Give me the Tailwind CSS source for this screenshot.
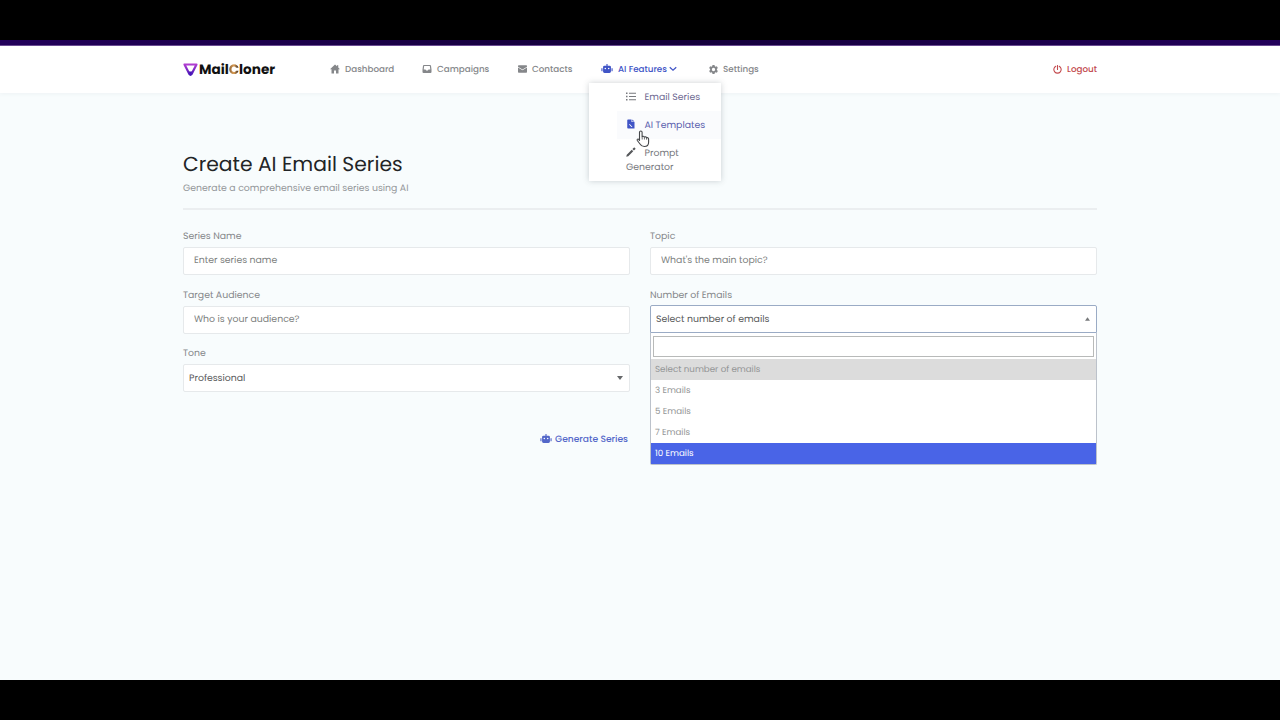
<!DOCTYPE html>
<html lang="en">

<head>
    <meta charset="UTF-8" />
    <meta name="viewport" content="width=device-width, initial-scale=1.0" />
    <title>MailCloner</title>
    <script src="https://cdn.jsdelivr.net/npm/@tailwindcss/browser@4"></script>
</head>

<body class="bg-black font-['Poppins','Inter',sans-serif] text-[9.350px] leading-[14px] text-[#85878a] [text-rendering:geometricPrecision]">
    <svg class="hidden">
        <symbol id="robot" viewBox="0 0 20 16">
            <path fill="currentColor" fill-rule="evenodd" d="M9 0h2v3h3.5A2.5 2.5 0 0 1 17 5.500V13.500A2.500 2.500 0 0 1 14.500 16h-9A2.500 2.500 0 0 1 3 13.500v-8A2.500 2.500 0 0 1 5.500 3H9zM7 6.500a1.400 1.400 0 1 0 0 2.800 1.400 1.400 0 0 0 0-2.800zm6 0a1.400 1.400 0 1 0 0 2.800 1.400 1.400 0 0 0 0-2.800zM0 7.500h2V13H1a1 1 0 0 1-1-1zm18 0h2V12a1 1 0 0 1-1 1h-1z" />
        </symbol>
    </svg>
    <div class="flex flex-col h-[720px] py-10 overflow-hidden">
        <div class="h-1.5 shrink-0 bg-gradient-to-r from-[#22005a] via-[#14003a] to-[#22005a] border-b border-[#6c4a93]"></div>
        <header class="h-[47px] shrink-0 bg-white shadow-[0_1px_4px_rgba(60,80,100,0.06)] relative z-10">
            <div class="w-[914px] h-full mx-auto pb-px flex items-center relative">
                <a href="#" class="w-[147px] pt-px flex items-center gap-px text-[#111]">
                    <svg class="w-[15px] h-[13px]" viewBox="0 0 15 13">
                        <defs>
                            <linearGradient id="logo" x1="0" y1="0" x2="0" y2="1">
                                <stop offset="0" stop-color="#b03dd0" />
                                <stop offset="1" stop-color="#4816b8" />
                            </linearGradient>
                        </defs>
                        <path d="M1.500 1.500h12L8.500 11.200q-1 1.300-2 0z" fill="none" stroke="url(#logo)" stroke-width="2.200" stroke-linejoin="round" />
                        <path d="M5.500 8.500h4L7.500 12z" fill="#4816b8" />
                    </svg>
                    <span class="font-bold text-[13.600px]">Mail<span class="bg-gradient-to-r from-[#8a6238] via-[#e0a055] to-[#2b2019] bg-clip-text text-transparent">C</span>loner</span>
                </a>
                <nav class="flex items-center font-medium text-[8.750px]">
                    <a href="#" class="w-[92px] flex items-center gap-[5px]">
                        <svg class="w-[10px] h-[10px]" viewBox="0 0 20 20" fill="currentColor"><path d="M10 1 0 10.500h3V19h5v-6h4v6h5v-8.500h3L16.500 7V2.500H14v2.200z" /></svg>
                        <span class="mt-px">Dashboard</span>
                    </a>
                    <a href="#" class="w-[96px] flex items-center gap-[5px]">
                        <svg class="w-[10px] h-[10px]" viewBox="0 0 20 20" fill="currentColor"><path fill-rule="evenodd" d="M4 2h12a2 2 0 0 1 2 1.500L19 11v5a2 2 0 0 1-2 2H3a2 2 0 0 1-2-2v-5l1-7.500A2 2 0 0 1 4 2zm.3 2.200L3.400 11H7l1.300 2h3.400L13 11h3.600l-.9-6.800z" /></svg>
                        <span class="mt-px">Campaigns</span>
                    </a>
                    <a href="#" class="w-[83px] flex items-center gap-[5px]">
                        <svg class="w-[9px] h-[8px]" viewBox="0 0 18 15" fill="currentColor"><path d="M1.500 0h15A1.500 1.500 0 0 1 18 1.500V2.800L9 8.500 0 2.800V1.500A1.500 1.500 0 0 1 1.500 0zM0 4.500l9 5.500 9-5.500v9a1.500 1.500 0 0 1-1.500 1.500h-15A1.500 1.500 0 0 1 0 13.500z" /></svg>
                        <span class="mt-px">Contacts</span>
                    </a>
                    <div class="w-[108px] relative text-[#4054c6]">
                        <a href="#" class="flex items-center">
                            <svg class="w-[12px] h-[9px] mr-[5px] -mt-px"><use href="#robot" /></svg>
                            <span class="mt-px">AI Features</span>
                            <svg class="w-[8px] h-[6px] ml-[2px]" viewBox="0 0 16 10" fill="none" stroke="currentColor" stroke-width="2.400"><path d="m1.500 1.500 6.500 6 6.500-6" /></svg>
                        </a>
                        <!-- submenu -->
                        <ul class="absolute top-[21px] -left-[12px] w-[132px] h-[98px] pl-7 bg-white shadow-[0_0_6px_rgba(60,70,80,0.25)] text-[#77797e] text-[9.350px] font-normal">
                            <li class="pt-2 pb-1.5 pl-[9px] whitespace-nowrap">
                                <svg class="inline w-[10px] h-[9px] mr-[6px] -mt-px" viewBox="0 0 20 18" fill="currentColor"><path d="M0 1h3v3H0zm6 .5h14v2H6zM0 7.500h3v3H0zM6 8h14v2H6zM0 14h3v3H0zm6 .5h14v2H6z" /></svg>
                                <span class="text-[#6d6992]">Email Series</span>
                            </li>
                            <li class="pt-2 pb-1.5 pl-[9px] whitespace-nowrap bg-[#fafbfd] text-[#5a5fae]">
                                <svg class="inline w-[10px] h-[10px] mr-[6px] -mt-px" viewBox="0 0 20 20" fill="#4054c6"><path fill-rule="evenodd" d="M4 1h7v5h6v13H4a1.500 1.500 0 0 1-1.500-1.500v-15A1.500 1.500 0 0 1 4 1zm8.500 0L17 4.800h-4.500zM7.500 10l5.500 6h-2.200L6 10.800z" /></svg>
                                <span>AI Templates</span>
                            </li>
                            <li class="pt-2 pb-1.5 pl-[9px]">
                                <svg class="inline w-[10px] h-[10px] mr-[6px] -mt-px" viewBox="0 0 20 20" fill="#55575a"><path d="m1.500 15.500 10-10 3 3-10 10-4 1zM12.800 4.200l2.700-2.700a1.500 1.500 0 0 1 2.200 0l.8.8a1.500 1.500 0 0 1 0 2.200l-2.700 2.700z" /></svg>
                                <span>Prompt Generator</span>
                            </li>
                        </ul>
                        <svg class="absolute top-[68px] left-[35px] w-[14px] h-[18px]" viewBox="0 0 14 18"><path d="M3.500 10.500V2.300a1.300 1.300 0 0 1 2.600 0V7c.3-1 2.100-1 2.300.3.5-.8 2-.6 2.200.6.700-.6 2-.2 2 1v3.300c0 2.800-1.400 4.300-4.300 4.300-2.300 0-3.300-.8-4.300-2.500L1.300 10.500C.7 9.300 2 8.500 2.800 9.400z" fill="#fff" stroke="#45474a" stroke-width="1.100" stroke-linejoin="round" /><path d="M6.200 7.500v2m2.200-2v2m2.200-1.500v1.700" stroke="#45474a" stroke-width=".8" /></svg>
                    </div>
                    <a href="#" class="flex items-center gap-[5px]">
                        <svg class="w-[9px] h-[9px]" viewBox="0 0 18 18" fill="currentColor"><path fill-rule="evenodd" d="M7 0h4l.6 2.600 1.600.9 2.500-.8 2 3.400L15.800 8v2l1.900 1.900-2 3.400-2.500-.8-1.600.9L11 18H7l-.6-2.600-1.600-.9-2.500.8-2-3.400L2.200 10V8L.3 6.100l2-3.400 2.500.8 1.600-.9zM9 5.700a3.300 3.300 0 1 0 0 6.600 3.300 3.300 0 0 0 0-6.600z" /></svg>
                        <span class="mt-px">Settings</span>
                    </a>
                </nav>
                <a href="#" class="ml-auto flex items-center gap-[5px] font-medium text-[8.750px] text-[#c34a4e]">
                    <svg class="w-[9px] h-[9px]" viewBox="0 0 18 18" fill="none" stroke="currentColor" stroke-width="2.200" stroke-linecap="round"><path d="M9 1v8M5.500 2.500a7.300 7.300 0 1 0 7 0" /></svg>
                    <span class="mt-px">Logout</span>
                </a>
            </div>
        </header>
        <main class="flex-1 bg-[#f8fcfd]">
            <div class="w-[914px] mx-auto pt-[58px]">
                <h1 class="text-[20.300px] leading-[28px] text-[#222426]">Create AI Email Series</h1>
                <p class="mt-[3px] text-[#939699]">Generate a comprehensive email series using AI</p>
                <hr class="mt-[12px] border-t-2 border-[#ebeef0]" />
                <form class="mt-[19px] grid grid-cols-2 gap-x-5">
                    <div class="h-[58.700px]">
                        <label class="block pt-px mb-[3px]">Series Name</label>
                        <input type="text" placeholder="Enter series name" class="block w-full h-7 px-[10px] bg-white border border-[#e6e9eb] rounded-xs [text-rendering:inherit] placeholder:text-[#7d7f80]" />
                    </div>
                    <div class="h-[58.700px]">
                        <label class="block pt-px mb-[3px]">Topic</label>
                        <input type="text" placeholder="What's the main topic?" class="block w-full h-7 px-[10px] bg-white border border-[#e6e9eb] rounded-xs [text-rendering:inherit] placeholder:text-[#7d7f80]" />
                    </div>
                    <div class="h-[58.700px]">
                        <label class="block pt-px mb-[3px]">Target Audience</label>
                        <input type="text" placeholder="Who is your audience?" class="block w-full h-7 px-[10px] bg-white border border-[#e6e9eb] rounded-xs [text-rendering:inherit] placeholder:text-[#7d7f80]" />
                    </div>
                    <div class="h-[58.700px] relative">
                        <label class="block pt-px mb-[2px]">Number of Emails</label>
                        <div class="h-7 pl-[5px] pr-[6px] flex items-center justify-between bg-white border border-[#9aabc5] rounded-t-xs text-[#58595a]">
                            <span class="mt-[3px]">Select number of emails</span>
                            <svg class="w-[5px] h-[4px]" viewBox="0 0 6 4" fill="#77797b"><path d="M0 4h6L3 0z" /></svg>
                        </div>
                        <!-- opened option list -->
                        <div class="absolute top-[45px] inset-x-0 bg-white border border-t-0 border-[#bcc2cb] rounded-b-xs text-[#939596]">
                            <div class="h-[26px] px-[2px] pt-[3px]">
                                <div class="h-[21px] border border-[#b8bab9]"></div>
                            </div>
                            <ul class="text-[8.700px] leading-[23px]">
                                <li class="h-[21px] px-[4px] bg-[#dcdcdc]">Select number of emails</li>
                                <li class="h-[21px] px-[4px]">3 Emails</li>
                                <li class="h-[21px] px-[4px]">5 Emails</li>
                                <li class="h-[21px] px-[4px]">7 Emails</li>
                                <li class="h-[21px] px-[4px] bg-[#4964e7] text-white">10 Emails</li>
                            </ul>
                        </div>
                    </div>
                    <div>
                        <label class="block pt-px mb-[3px]">Tone</label>
                        <div class="h-7 pl-[5px] pr-[6px] flex items-center justify-between bg-white border border-[#e6e9eb] rounded-xs text-[#58595a]">
                            <span class="mt-0.5">Professional</span>
                            <svg class="w-[6px] h-[4px]" viewBox="0 0 6 4" fill="#66686a"><path d="M0 0h6L3 4z" /></svg>
                        </div>
                        <button type="button" class="mt-[40px] ml-auto mr-[2px] flex items-center gap-[3px] font-medium text-[9.150px] text-[#5367c9] [text-rendering:inherit]">
                            <svg class="w-[12px] h-[9px] -mt-0.5"><use href="#robot" /></svg>
                            <span class="mt-px">Generate Series</span>
                        </button>
                    </div>
                </form>
            </div>
        </main>
    </div>
</body>

</html>
